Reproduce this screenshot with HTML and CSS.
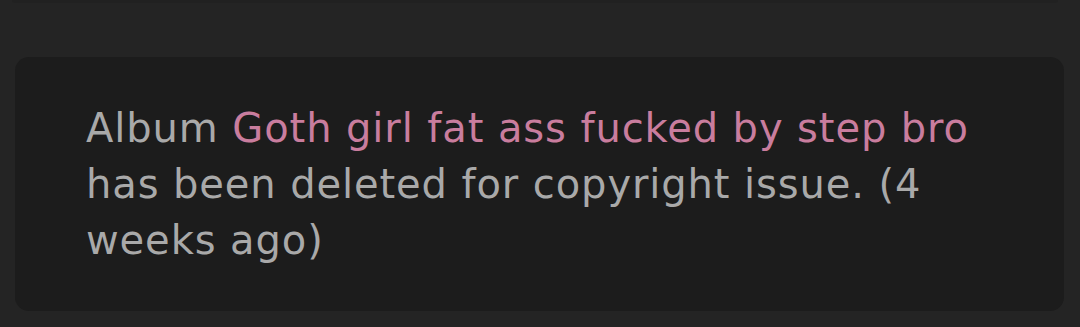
FILE: index.html
```html
<!DOCTYPE html>
<html lang="en">
<head>
<meta charset="utf-8">
<title>Notification</title>
<link rel="stylesheet" href="styles.css">
</head>
<body>
  <div class="prev-card"></div>
  <div class="card">
    <p class="message">Album <a class="album" href="#">Goth girl fat ass fucked by step bro</a> has been deleted for copyright issue. (4 weeks ago)</p>
  </div>
</body>
</html>
```
FILE: styles.css
```css
html, body {
  margin: 0;
  padding: 0;
  background: #242424;
  width: 1080px;
  height: 327px;
  overflow: hidden;
}

body {
  font-family: "DejaVu Sans", sans-serif;
}

.prev-card {
  margin: 0 22px 0 12px;
  height: 3px;
  background: #212121;
  border-radius: 0 0 6px 6px;
}

.card {
  margin: 54px 16px 0 15px;
  background: #1c1c1c;
  border-radius: 14px;
  padding: 43px 70px 43px 71px;
}

.message {
  margin: 0;
  font-size: 40px;
  line-height: 56px;
  letter-spacing: 0.9px;
  color: #a9a9a9;
}

.album {
  color: #c97d9e;
  text-decoration: none;
}
```
